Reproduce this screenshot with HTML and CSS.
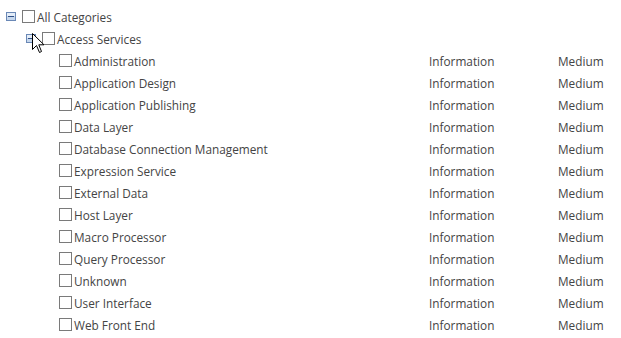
FILE: index.html
```html
<!DOCTYPE html>
<html>
<head>
<meta charset="utf-8">
<link rel="stylesheet" href="styles.css">
</head>
<body>
<div class="tree">
  <div class="row lvl0">
    <svg class="exp" width="10" height="9" viewBox="0 0 10 9"><rect x="0.5" y="0.5" width="9" height="8" fill="#c6d7ec" stroke="#6a88b6"/><rect x="1" y="1" width="8" height="3" fill="#e4edf8"/><line x1="2" y1="4.5" x2="8" y2="4.5" stroke="#2f4f86"/></svg>
    <span class="cb"></span><span class="name">All Categories</span>
  </div>
  <div class="row lvl1">
    <svg class="exp" width="10" height="9" viewBox="0 0 10 9"><rect x="0.5" y="0.5" width="9" height="8" fill="#c6d7ec" stroke="#6a88b6"/><rect x="1" y="1" width="8" height="3" fill="#e4edf8"/><line x1="2" y1="4.5" x2="8" y2="4.5" stroke="#2f4f86"/></svg>
    <span class="cb"></span><span class="name">Access Services</span>
  </div>
  <div class="row lvl2"><span class="cb"></span><span class="name">Administration</span><span class="lvl">Information</span><span class="sev">Medium</span></div>
  <div class="row lvl2"><span class="cb"></span><span class="name">Application Design</span><span class="lvl">Information</span><span class="sev">Medium</span></div>
  <div class="row lvl2"><span class="cb"></span><span class="name">Application Publishing</span><span class="lvl">Information</span><span class="sev">Medium</span></div>
  <div class="row lvl2"><span class="cb"></span><span class="name">Data Layer</span><span class="lvl">Information</span><span class="sev">Medium</span></div>
  <div class="row lvl2"><span class="cb"></span><span class="name">Database Connection Management</span><span class="lvl">Information</span><span class="sev">Medium</span></div>
  <div class="row lvl2"><span class="cb"></span><span class="name">Expression Service</span><span class="lvl">Information</span><span class="sev">Medium</span></div>
  <div class="row lvl2"><span class="cb"></span><span class="name">External Data</span><span class="lvl">Information</span><span class="sev">Medium</span></div>
  <div class="row lvl2"><span class="cb"></span><span class="name">Host Layer</span><span class="lvl">Information</span><span class="sev">Medium</span></div>
  <div class="row lvl2"><span class="cb"></span><span class="name">Macro Processor</span><span class="lvl">Information</span><span class="sev">Medium</span></div>
  <div class="row lvl2"><span class="cb"></span><span class="name">Query Processor</span><span class="lvl">Information</span><span class="sev">Medium</span></div>
  <div class="row lvl2"><span class="cb"></span><span class="name">Unknown</span><span class="lvl">Information</span><span class="sev">Medium</span></div>
  <div class="row lvl2"><span class="cb"></span><span class="name">User Interface</span><span class="lvl">Information</span><span class="sev">Medium</span></div>
  <div class="row lvl2"><span class="cb"></span><span class="name">Web Front End</span><span class="lvl">Information</span><span class="sev">Medium</span></div>
</div>
<svg class="cursor" width="14" height="22" viewBox="0 0 14 22"><path d="M0.5 0.5 L0.5 16.5 L4.5 12.5 L7.5 19.5 L9.5 18.5 L6.8 11.8 L12 11.8 Z" fill="#fff" stroke="#000" stroke-linejoin="miter"/></svg>
</body>
</html>
```
FILE: styles.css
```css
html, body {
  margin: 0;
  padding: 0;
  background: #fff;
}
body {
  font-family: "Open Sans", "Noto Sans", sans-serif;
  font-size: 11.8px;
  color: #444;
  position: relative;
  width: 621px;
  height: 338px;
  overflow: hidden;
}
.tree {
  padding-top: 5px;
}
.row {
  display: flex;
  align-items: center;
  height: 22px;
  white-space: nowrap;
}
.exp {
  display: block;
  flex: none;
  margin-right: 6px;
}
.lvl0 { padding-left: 6px; }
.lvl1 { padding-left: 26px; }
.lvl2 { padding-left: 59px; }
.cb {
  display: block;
  flex: none;
  width: 11px;
  height: 11px;
  border: 1px solid #7a7a7a;
  background: #fff;
  margin-right: 2px;
}
.name, .lvl, .sev {
  line-height: 20px;
  padding-top: 2px;
}
.lvl2 .name {
  width: 355px;
}
.lvl {
  width: 129px;
}
.cursor {
  position: absolute;
  left: 32px;
  top: 33px;
}
```
